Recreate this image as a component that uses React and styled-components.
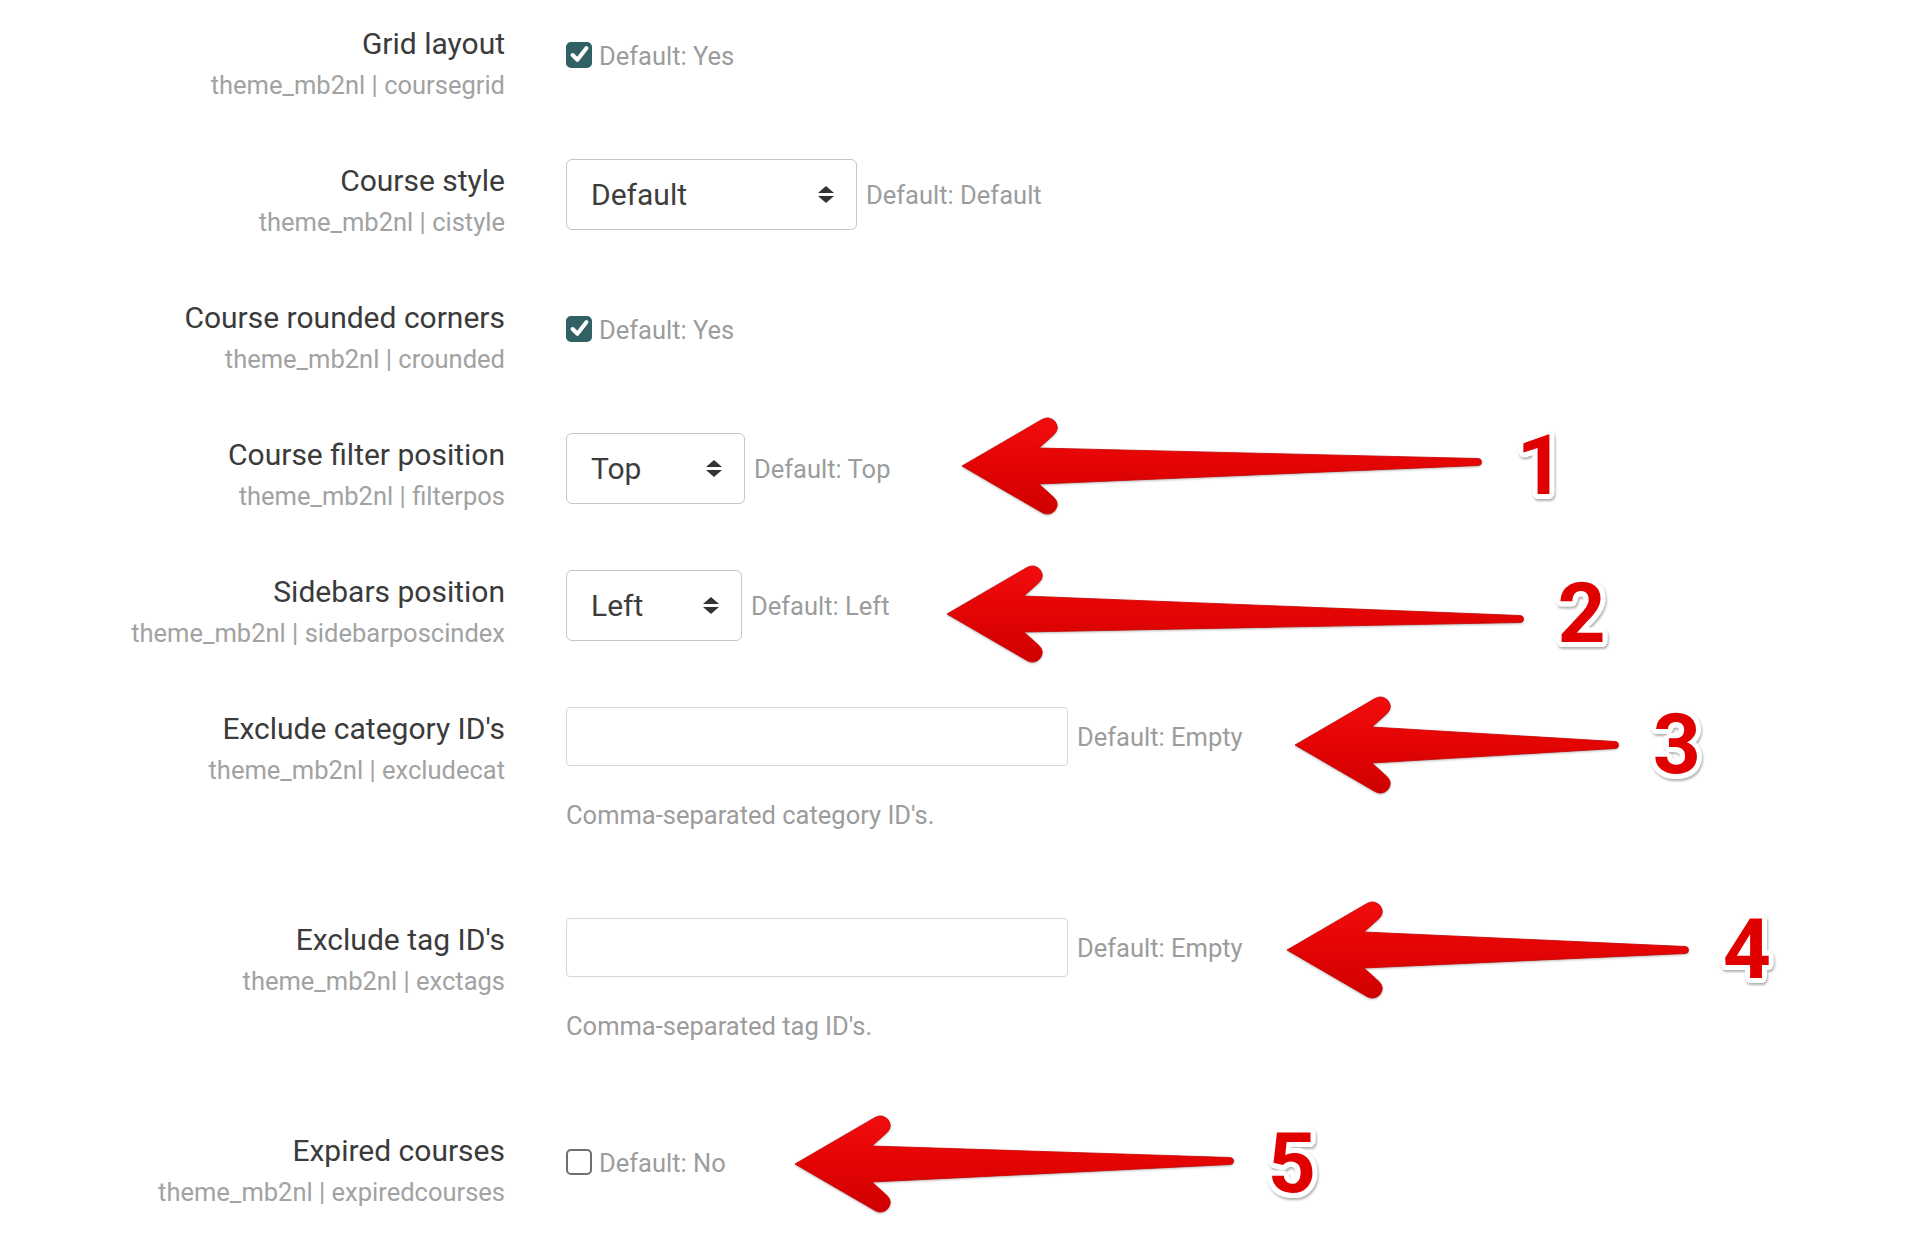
import React from 'react'
import styled, { createGlobalStyle } from 'styled-components'

const GlobalStyle = createGlobalStyle`
  html, body {
    margin: 0;
    padding: 0;
    background: #ffffff;
  }
  body {
    font-family: Roboto, 'Noto Sans', 'Liberation Sans', sans-serif;
    color: #3a3a3a;
  }
`

const Page = styled.div`
  width: 1910px;
  height: 1234px;
  overflow: hidden;
  padding-top: 26px;
  box-sizing: border-box;
`

const SettingRow = styled.div`
  display: grid;
  grid-template-columns: 505px 1fr;
  column-gap: 61px;
  align-items: start;
  margin-bottom: 60px;
`

const LabelBlock = styled.div`
  text-align: right;
`

const LabelTitle = styled.div`
  font-size: 30px;
  line-height: 36px;
  color: #3b3b3b;
`

const LabelSub = styled.div`
  margin-top: 5px;
  font-size: 25.5px;
  line-height: 36px;
  color: #a2a2a2;
`

const ControlCol = styled.div`
  margin-top: ${p => p.$offset}px;
`

const ControlLine = styled.div`
  display: flex;
  align-items: center;
  min-height: ${p => (p.$check ? '36px' : 'auto')};
`

const Checkbox = styled.span`
  width: 26px;
  height: 26px;
  box-sizing: border-box;
  border-radius: 5px;
  flex-shrink: 0;
  display: flex;
  align-items: center;
  justify-content: center;
  background: ${p => (p.$checked ? '#2f6165' : '#ffffff')};
  border: 2px solid ${p => (p.$checked ? '#2f6165' : '#6f6f6f')};
  margin-right: 7px;
`

const DefaultText = styled.span`
  font-size: 25.5px;
  line-height: 36px;
  color: #9c9c9c;
  white-space: nowrap;
  padding-top: ${p => (p.$check ? '3px' : '0')};
`

const SelectBox = styled.div`
  width: ${p => p.$width}px;
  height: 71px;
  box-sizing: border-box;
  border: 1px solid #c6c6c6;
  border-radius: 6px;
  display: flex;
  align-items: center;
  justify-content: space-between;
  padding: 0 22px 0 24px;
  font-size: 30px;
  color: #3d3d3d;
  margin-right: 9px;
  flex-shrink: 0;
`

const TextInput = styled.div`
  width: 502px;
  height: 59px;
  box-sizing: border-box;
  border: 1px solid #d6d6d6;
  border-radius: 4px;
  margin-right: 9px;
  flex-shrink: 0;
`

const HelpText = styled.div`
  margin-top: 31px;
  margin-bottom: 29px;
  font-size: 25.5px;
  line-height: 36px;
  color: #9c9c9c;
`

const Annotation = styled.div`
  display: flex;
  align-items: center;
  height: 0;
  margin-left: ${p => p.$gap}px;
  transform: translateY(${p => p.$shift}px);
`

const ArrowSvg = styled.svg`
  display: block;
  flex-shrink: 0;
  overflow: visible;
  filter: drop-shadow(0.5px 1.5px 1px rgba(0, 0, 0, 0.28));
`

const StepNumber = styled.span`
  margin-left: 34px;
  font-family: Roboto, 'Liberation Sans', sans-serif;
  font-weight: 700;
  font-size: 84px;
  line-height: 1;
  color: #e10000;
  text-shadow:
    5px 0 0 #fff, -5px 0 0 #fff, 0 5px 0 #fff, 0 -5px 0 #fff,
    3.5px 3.5px 0 #fff, -3.5px 3.5px 0 #fff, 3.5px -3.5px 0 #fff, -3.5px -3.5px 0 #fff,
    4.6px 1.9px 0 #fff, -4.6px 1.9px 0 #fff, 4.6px -1.9px 0 #fff, -4.6px -1.9px 0 #fff,
    1.9px 4.6px 0 #fff, -1.9px 4.6px 0 #fff, 1.9px -4.6px 0 #fff, -1.9px -4.6px 0 #fff;
  filter: drop-shadow(1px 2px 1px rgba(0, 0, 0, 0.3));
`

const CheckIcon = () => (
  <svg width="19" height="19" viewBox="0 0 18 18">
    <path d="M2.5 9.5 L7 14 L15.5 3" fill="none" stroke="#fff" strokeWidth="3.8" strokeLinecap="round" strokeLinejoin="round" />
  </svg>
)

const Caret = () => (
  <svg width="16" height="17" viewBox="0 0 16 17">
    <path d="M8 0 L16 7 L0 7 Z" fill="#333" />
    <path d="M0 10 L16 10 L8 17 Z" fill="#333" />
  </svg>
)

// big red annotation arrow pointing left, tail tapers to a point
const Arrow = ({ length, tilt }) => {
  const c = 50
  const t = c + tilt
  const L = length
  const d = [
    `M0,${c}`,
    `L80,${c - 46.5}`,
    `Q87,${c - 50.5} 93,${c - 44.5}`,
    `Q98,${c - 37.5} 92,${c - 31.5}`,
    `L77,${c - 18}`,
    `L${L - 4},${t - 3.5}`,
    `A3.5,3.5 0 0 1 ${L - 4},${t + 3.5}`,
    `L77,${c + 18}`,
    `L92,${c + 31.5}`,
    `Q98,${c + 37.5} 93,${c + 44.5}`,
    `Q87,${c + 50.5} 80,${c + 46.5}`,
    'Z',
  ].join(' ')
  const id = `grad${L}`
  return (
    <ArrowSvg width={L} height="100" viewBox={`0 0 ${L} 100`}>
      <defs>
        <linearGradient id={id} x1="0" y1="0" x2="0" y2="1">
          <stop offset="0" stopColor="#f20d0d" />
          <stop offset="0.5" stopColor="#e30404" />
          <stop offset="1" stopColor="#cf0000" />
        </linearGradient>
      </defs>
      <path d={d} fill={`url(#${id})`} stroke="#c70000" strokeWidth="0.8" />
    </ArrowSvg>
  )
}

const settings = [
  { title: 'Grid layout', name: 'coursegrid', type: 'check', checked: true, def: 'Yes' },
  { title: 'Course style', name: 'cistyle', type: 'select', value: 'Default', width: 291, def: 'Default' },
  { title: 'Course rounded corners', name: 'crounded', type: 'check', checked: true, def: 'Yes' },
  {
    title: 'Course filter position', name: 'filterpos', type: 'select', value: 'Top', width: 179, def: 'Top',
    note: { n: 1, gap: 72, length: 520, tilt: -4, shift: -3 },
  },
  {
    title: 'Sidebars position', name: 'sidebarposcindex', type: 'select', value: 'Left', width: 176, def: 'Left',
    note: { n: 2, gap: 57, length: 577, tilt: 5, shift: 8 },
  },
  {
    title: "Exclude category ID's", name: 'excludecat', type: 'text', def: 'Empty',
    help: "Comma-separated category ID's.",
    note: { n: 3, gap: 52, length: 324, tilt: 0, shift: 8 },
  },
  {
    title: "Exclude tag ID's", name: 'exctags', type: 'text', def: 'Empty',
    help: "Comma-separated tag ID's.",
    note: { n: 4, gap: 44, length: 402, tilt: 0, shift: 2 },
  },
  {
    title: 'Expired courses', name: 'expiredcourses', type: 'check', checked: false, def: 'No',
    note: { n: 5, gap: 69, length: 439, tilt: -3, shift: 2 },
  },
]

const Setting = ({ s }) => {
  const isCheck = s.type === 'check'
  return (
    <SettingRow>
      <LabelBlock>
        <LabelTitle>{s.title}</LabelTitle>
        <LabelSub>theme_mb2nl | {s.name}</LabelSub>
      </LabelBlock>
      <ControlCol $offset={isCheck ? 9 : -4}>
        <ControlLine $check={isCheck}>
          {isCheck && (
            <Checkbox $checked={s.checked}>{s.checked && <CheckIcon />}</Checkbox>
          )}
          {s.type === 'select' && (
            <SelectBox $width={s.width}>
              <span>{s.value}</span>
              <Caret />
            </SelectBox>
          )}
          {s.type === 'text' && <TextInput />}
          <DefaultText $check={isCheck}>Default: {s.def}</DefaultText>
          {s.note && (
            <Annotation $gap={s.note.gap} $shift={s.note.shift}>
              <Arrow length={s.note.length} tilt={s.note.tilt} />
              <StepNumber>{s.note.n}</StepNumber>
            </Annotation>
          )}
        </ControlLine>
        {s.help && <HelpText>{s.help}</HelpText>}
      </ControlCol>
    </SettingRow>
  )
}

export default function App() {
  return (
    <>
      <GlobalStyle />
      <Page>
        {settings.map(s => (
          <Setting key={s.name} s={s} />
        ))}
      </Page>
    </>
  )
}
